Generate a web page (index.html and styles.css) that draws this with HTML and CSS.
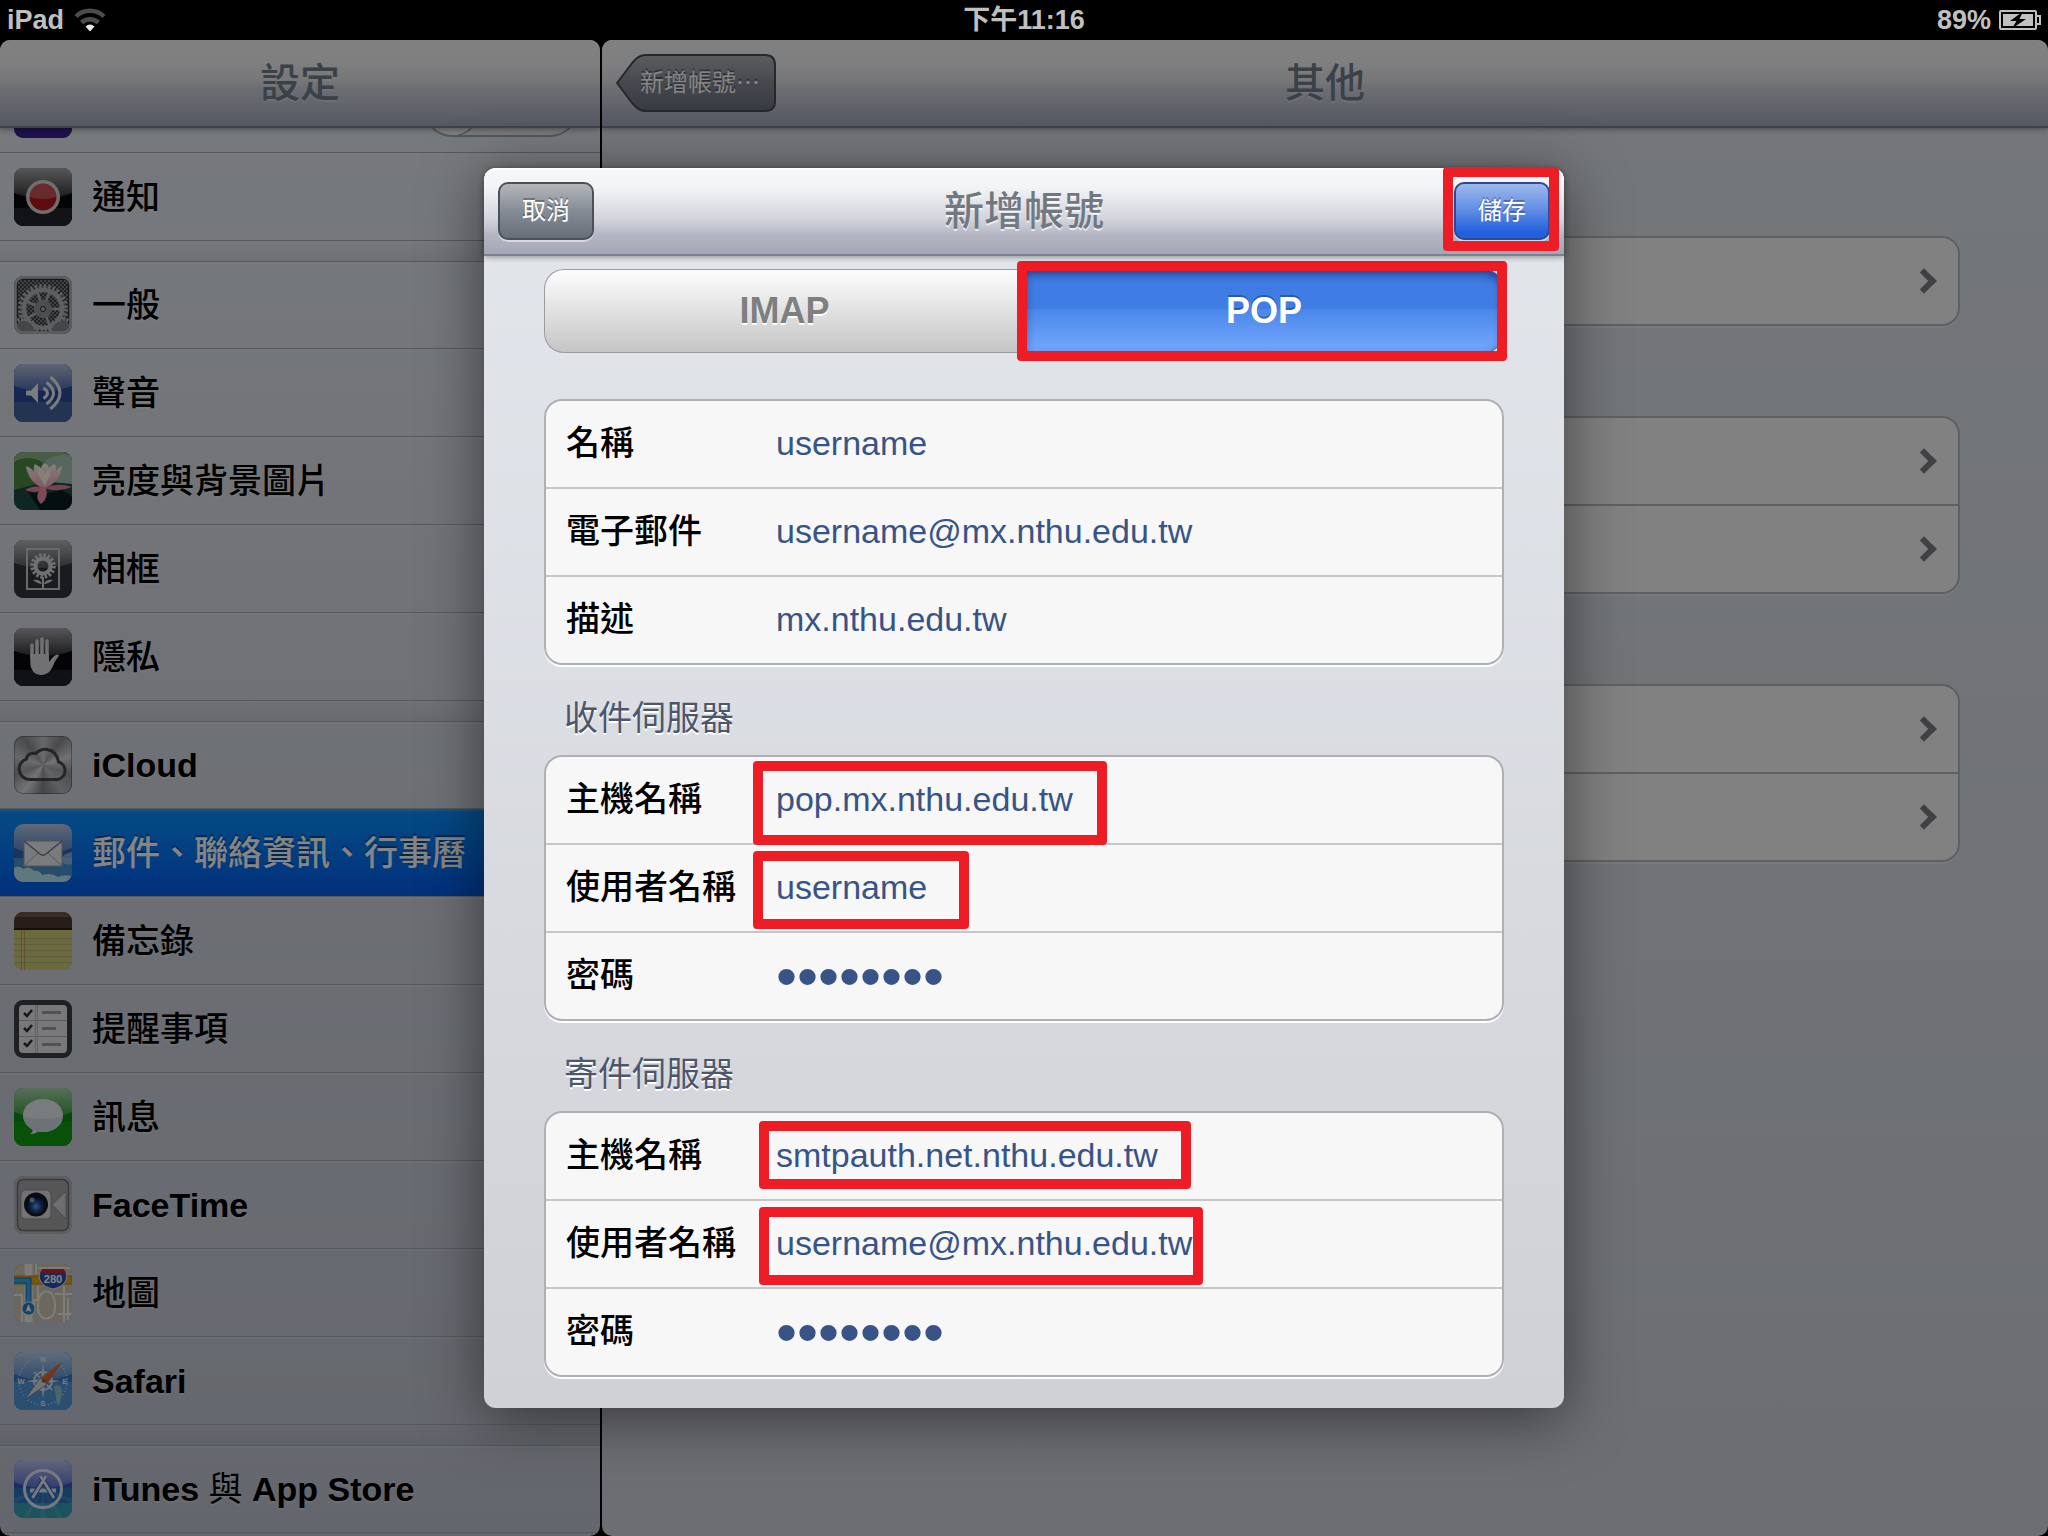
FILE: index.html
```html
<!DOCTYPE html>
<html lang="zh-Hant">
<head>
    <meta charset="UTF-8">
    <meta name="viewport" content="width=device-width, initial-scale=1.0">
    <title>設定</title>
    <link rel="stylesheet" href="styles.css">
</head>
<body>
    <!-- shared gradients -->
    <svg class="defs" width="0" height="0" aria-hidden="true">
        <defs>
            <linearGradient id="gloss" x1="0" y1="0" x2="0" y2="1">
                <stop offset="0" stop-color="#fff" stop-opacity=".65"/>
                <stop offset="1" stop-color="#fff" stop-opacity=".18"/>
            </linearGradient>
            <linearGradient id="needle" x1="0" y1="0" x2="1" y2="1">
                <stop offset="0" stop-color="#ff9a5c"/>
                <stop offset="1" stop-color="#b8381a"/>
            </linearGradient>
            <radialGradient id="lens" cx=".5" cy=".6" r=".5">
                <stop offset="0" stop-color="#5fa8f0"/>
                <stop offset=".5" stop-color="#1d4a94"/>
                <stop offset="1" stop-color="#0a1430"/>
            </radialGradient>
            <linearGradient id="petal" x1="0" y1="0" x2="0" y2="1">
                <stop offset="0" stop-color="#fffbf0"/>
                <stop offset="1" stop-color="#f2a5b8"/>
            </linearGradient>
            <linearGradient id="back" x1="0" y1="0" x2="0" y2="1">
                <stop offset="0" stop-color="#b0b2b8"/>
                <stop offset=".5" stop-color="#868b96"/>
                <stop offset="1" stop-color="#6b7180"/>
            </linearGradient>
            <pattern id="mesh" width="4" height="4" patternUnits="userSpaceOnUse">
                <rect width="4" height="4" fill="#7c7d81"/>
                <circle cx="1" cy="1" r="1" fill="#2a2b2f"/>
                <circle cx="3" cy="3" r="1" fill="#2a2b2f"/>
            </pattern>
        </defs>
    </svg>

    <header class="status-bar">
        <div class="status-left">
            <span>iPad</span>
            <svg width="32" height="24" viewBox="0 0 32 24" fill="none" aria-hidden="true">
                <path d="M2 8.500a20 20 0 0 1 28 0" stroke="#4c4c4c" stroke-width="4.500"/>
                <path d="M7.500 14.500a12.500 12.500 0 0 1 17 0" stroke="#4c4c4c" stroke-width="4.500"/>
                <path d="M16 23.500l-4.500-5q4.500-4 9 0z" fill="#e8e8e8"/>
            </svg>
        </div>
        <div class="status-time">下午11:16</div>
        <div class="status-right">
            <span>89%</span>
            <svg width="42" height="20" viewBox="0 0 42 20" aria-hidden="true">
                <rect x="1" y="1" width="36" height="18" rx="1" fill="none" stroke="#c0c0c0" stroke-width="2"/>
                <path d="M38 6h3v8h-3" fill="none" stroke="#c0c0c0" stroke-width="2"/>
                <rect x="4" y="4" width="30" height="12" fill="#c0c0c0"/>
                <path d="M24 1.500L11 11h6.500L13 18.500 27 9h-6.500z" fill="#000"/>
            </svg>
        </div>
    </header>

    <div class="app">
        <aside class="panel sidebar">
            <div class="navbar"><h1>設定</h1></div>
            <nav class="list">
                <div class="item">
                    <svg class="icon" viewBox="0 0 58 58"><rect width="58" height="58" fill="#3b2191"/></svg>
                    <input class="switch" type="checkbox" aria-label="勿擾模式">
                </div>
                <a class="item" href="#">
                    <svg class="icon" viewBox="0 0 58 58">
                        <rect width="58" height="58" fill="#08090d"/>
                        <rect y="40" width="58" height="18" fill="#24262b"/>
                        <path d="M0 0h58v25q-29 11-58 0z" fill="url(#gloss)"/>
                        <circle cx="29" cy="29" r="17" fill="#d5d5d5"/>
                        <circle cx="29" cy="29" r="13.500" fill="#b8181c"/>
                        <path d="M15.500 29a13.500 13.500 0 0 1 27 0q-13 4-27 0z" fill="#fff" opacity=".25"/>
                    </svg>
                    <span>通知</span>
                </a>
                <div class="gap"></div>
                <a class="item first" href="#">
                    <svg class="icon" viewBox="0 0 58 58">
                        <rect width="58" height="58" fill="#9c9ea3"/>
                        <rect x="3" y="3" width="52" height="52" rx="5" fill="url(#mesh)" stroke="#222" stroke-width="1.500"/>
                        <g fill="none" stroke="#b4b6bb">
                            <circle cx="29" cy="33" r="22.500" stroke-width="5" stroke-dasharray="2.300 2.120"/>
                            <circle cx="29" cy="33" r="19" stroke-width="4.500"/>
                            <path d="M29 33L23 15M29 33L47 33M29 33L36 15M29 33L12 25M29 33L12 43M29 33L36 50" stroke-width="2.500"/>
                            <circle cx="10" cy="55" r="12" stroke-width="4" stroke-dasharray="2 1.800"/>
                            <circle cx="48" cy="55" r="12" stroke-width="4" stroke-dasharray="2 1.800"/>
                        </g>
                        <circle cx="10" cy="55" r="10" fill="#85878c"/>
                        <circle cx="48" cy="55" r="10" fill="#85878c"/>
                        <circle cx="29" cy="33" r="9" fill="#94969b"/>
                        <circle cx="29" cy="33" r="2.500" fill="#bbb" stroke="#222"/>
                        <rect x="1.500" y="1.500" width="55" height="55" rx="8" fill="none" stroke="#b2b4b9" stroke-width="2.500"/>
                    </svg>
                    <span>一般</span>
                </a>
                <a class="item" href="#">
                    <svg class="icon" viewBox="0 0 58 58">
                        <rect width="58" height="58" fill="#2b4d9e"/>
                        <rect y="38" width="58" height="20" fill="#44659f"/>
                        <path d="M0 0h58v22q-29 10-58 0z" fill="url(#gloss)"/>
                        <path d="M12 26.500h5l7-7.500v20l-7-7.500h-5z" fill="#eceef4"/>
                        <path d="M29.500 24q8 5 0 10.500M32.500 18.500q14 10.500 0 21.500M36.500 13q19 16 0 32" fill="none" stroke="#eceef4" stroke-width="3"/>
                    </svg>
                    <span>聲音</span>
                </a>
                <a class="item" href="#">
                    <svg class="icon" viewBox="0 0 58 58">
                        <rect width="58" height="58" fill="#1d4a44"/>
                        <path d="M0 0h58v24q-14-8-29-6-17 2-29 14z" fill="#8fb386"/>
                        <path d="M0 10q14-8 28 0l10 18-38 10z" fill="#4d8a44"/>
                        <path d="M32 8q16-8 26-4v28l-22-2z" fill="#a7c3b4"/>
                        <path d="M14 40l16 2 18-4 10 6v14H26z" fill="#0b1b22"/>
                        <path d="M30 37Q14 30 12 14q6 2 8 6-1-5 1-8 4 2 6 5 0-4 4-6 4 2 4 6 2-4 6-5 2 4 0 9 3-6 7-7-1 15-18 23z" fill="url(#petal)"/>
                        <path d="M31 34L24 22l1-8 6 8 6-8-1 9z" fill="#fff6ea"/>
                        <path d="M30 36q-10-4-19 2 10 4 19 0zM30 36q14-6 28-1-14 6-28 1z" fill="#e8809b"/>
                        <path d="M28 36q-9 8-1 16 8-6 5-16z" fill="#f08fa8"/>
                    </svg>
                    <span>亮度與背景圖片</span>
                </a>
                <a class="item" href="#">
                    <svg class="icon" viewBox="0 0 58 58">
                        <rect width="58" height="58" fill="#33353a"/>
                        <path d="M0 0h58v23q-29 10-58 0z" fill="url(#gloss)"/>
                        <rect x="13" y="9" width="32" height="40" fill="none" stroke="#c9cbd0" stroke-width="2"/>
                        <circle cx="29" cy="26" r="10" fill="none" stroke="#d4d6da" stroke-width="5.500" stroke-dasharray="2.300 1.630"/>
                        <circle cx="29" cy="26" r="7.500" fill="none" stroke="#d4d6da" stroke-width="4"/>
                        <path d="M29 37v12" stroke="#d4d6da" stroke-width="2"/>
                        <path d="M28 44q-4 0-9-4 7-1 9 4zM30 44q4 0 9-4-7-1-9 4z" fill="#d4d6da"/>
                    </svg>
                    <span>相框</span>
                </a>
                <a class="item" href="#">
                    <svg class="icon" viewBox="0 0 58 58">
                        <rect width="58" height="58" fill="#08090d"/>
                        <rect y="42" width="58" height="16" fill="#202227"/>
                        <path d="M0 0h58v23q-29 10-58 0z" fill="url(#gloss)"/>
                        <g fill="none" stroke="#d8d9dc" stroke-width="3.500" stroke-linecap="round">
                            <path d="M18 30V17M23 28V13M28 28V11M33 28V13"/>
                        </g>
                        <path d="M16.300 26h18.500l.5 8q3-6 8-7.500 2.500 0 1 2-4 5-6 11-4 8-12 7.500-9-1-10-11z" fill="#d8d9dc"/>
                    </svg>
                    <span>隱私</span>
                </a>
                <div class="gap"></div>
                <a class="item first" href="#">
                    <svg class="icon metal" viewBox="0 0 58 58">
                        <path d="M15 43.500a10.500 10.500 0 0 1-2.500-20.500q1-6.500 9.500-5.500 5-5 11-4 10 1.500 11.500 12.500a9 9 0 0 1-1 17.500z" fill="#fff" fill-opacity=".15" stroke="#45474b" stroke-width="3"/>
                    </svg>
                    <span class="latin">iCloud</span>
                </a>
                <a class="item selected" href="#">
                    <svg class="icon" viewBox="0 0 58 58">
                        <rect width="58" height="58" fill="#2f64ba"/>
                        <rect y="34" width="58" height="24" fill="#4d93cf"/>
                        <path d="M0 44q5-3 9 1 6-4 11 2 5-1 8 4 9-3 16 2 6-3 14-1v6H0z" fill="#b8e4ef"/>
                        <path d="M46 36q4-7 12-8v12q-7 2-12-4z" fill="#a5c8ea" opacity=".7"/>
                        <path d="M0 0h58v24q-29 12-58 0z" fill="url(#gloss)"/>
                        <rect x="10" y="17" width="38" height="25" fill="#e9ebef" stroke="#9aa2ae"/>
                        <path d="M10 17l16 13q3 2.500 6 0l16-13" fill="none" stroke="#6f7783" stroke-width="1.300"/>
                        <path d="M10 42l14-13M48 42L34 29" stroke="#a3a9b3" fill="none"/>
                    </svg>
                    <span>郵件、聯絡資訊、行事曆</span>
                </a>
                <a class="item" href="#">
                    <svg class="icon" viewBox="0 0 58 58">
                        <rect width="58" height="58" fill="#d0cd78"/>
                        <path d="M0 26.500h58M0 32.500h58M0 38.500h58M0 44.500h58M0 50.500h58" stroke="#b0b27c"/>
                        <path d="M7.500 18v40M10.500 18v40" stroke="#bd9a62"/>
                        <rect width="58" height="17" fill="#4d3833"/>
                        <rect y="16" width="58" height="2" fill="#2a1c18"/>
                        <rect width="58" height="5" fill="#6b5650"/>
                    </svg>
                    <span>備忘錄</span>
                </a>
                <a class="item" href="#">
                    <svg class="icon" viewBox="0 0 58 58">
                        <rect width="58" height="58" fill="#3c3e43"/>
                        <rect x="5" y="5" width="48" height="48" rx="4" fill="#e6e6ea"/>
                        <path d="M5 20.500h48M5 36.500h48" stroke="#aeb0b6"/>
                        <path d="M21.500 5v48M23.500 5v48" stroke="#e5aab4"/>
                        <path d="M10 13l3 3 5-6M10 28l3 3 5-6M10 43l3 3 5-6" fill="none" stroke="#2b2c30" stroke-width="2.500"/>
                        <path d="M28 12.500h19M28 28.500h14M28 44.500h19" stroke="#9a9ca2" stroke-width="3"/>
                    </svg>
                    <span>提醒事項</span>
                </a>
                <a class="item" href="#">
                    <svg class="icon" viewBox="0 0 58 58">
                        <rect width="58" height="58" fill="#0c8a12"/>
                        <rect y="34" width="58" height="24" fill="#109c10"/>
                        <path d="M0 0h58v24q-29 12-58 0z" fill="url(#gloss)"/>
                        <path d="M29 11c11 0 20 7 20 16.500S40 44 29 44q-3 0-5-.5-4 3-8 2.500 3-2 3-4.500C13 39 9 33 9 27.500 9 18 18 11 29 11z" fill="#e6edf2"/>
                        <path d="M9.500 29q19 4 39 0c-1 9-9 15-19.500 15S11 38 9.500 29z" fill="#d0dae4"/>
                    </svg>
                    <span>訊息</span>
                </a>
                <a class="item" href="#">
                    <svg class="icon" viewBox="0 0 58 58">
                        <rect width="58" height="58" fill="#b4b5b8"/>
                        <rect x="3.500" y="3.500" width="51" height="51" rx="6" fill="#a5a6a8" stroke="#6c6d70" stroke-width="1.500"/>
                        <rect x="7" y="14" width="30" height="29" rx="5" fill="#dcdde0" stroke="#8a8b8e"/>
                        <path d="M38 28.500L52 15v28z" fill="#d0d1d4" stroke="#8a8b8e"/>
                        <circle cx="22" cy="28.500" r="12" fill="#17181c"/>
                        <circle cx="22" cy="28.500" r="9.500" fill="url(#lens)"/>
                        <circle cx="18" cy="24" r="2.500" fill="#b8d4f8" opacity=".7"/>
                    </svg>
                    <span class="latin">FaceTime</span>
                </a>
                <a class="item" href="#">
                    <svg class="icon" viewBox="0 0 58 58">
                        <rect width="58" height="58" fill="#cfc8b2"/>
                        <g fill="none" stroke="#f0eee8" stroke-width="2">
                            <path d="M0 31h8v27M24 22v14h-4v10M50 22v36M54 34v24M24 40a8 12 0 0 1 17 0v5a8 9 0 0 1-17 0zM41 30h17M44 50h14M24 4h34M22 0v10"/>
                            <path d="M14.500 0v58" stroke-width="8"/>
                        </g>
                        <rect y="12" width="58" height="8" fill="#e4a812" stroke="#b38920"/>
                        <path d="M0 16.500h14.500V42" fill="none" stroke="#1673b8" stroke-width="6"/>
                        <path d="M0 16.500h14.500V42" fill="none" stroke="#38a8ec" stroke-width="4"/>
                        <circle cx="14.500" cy="44.500" r="6.500" fill="#2b7fc4" stroke="#cfe2f2"/>
                        <path d="M14.500 40l3 8-3-1.500-3 1.500z" fill="#fff"/>
                        <path d="M28 5h22q5 7 1 13-3 5-12 7-9-2-12-7-4-6 1-13z" fill="#2a52b0" stroke="#e6e9f2"/>
                        <path d="M28 5h22l2 4H26z" fill="#c3283a"/>
                        <text x="39" y="18.500" text-anchor="middle" class="shield">280</text>
                    </svg>
                    <span>地圖</span>
                </a>
                <a class="item" href="#">
                    <svg class="icon" viewBox="0 0 58 58">
                        <rect width="58" height="58" fill="#3a78c8"/>
                        <rect y="30" width="58" height="28" fill="#5598d8"/>
                        <path d="M0 0h58v22q-29 12-58 0z" fill="url(#gloss)"/>
                        <path d="M40 34q8-2 8 6l-3 14q-3-2-3-10z" fill="#a4d4c8" opacity=".7"/>
                        <circle cx="29" cy="29" r="24" fill="none" stroke="#cfe0f4" stroke-width="2" stroke-dasharray="1 2.500" opacity=".7"/>
                        <circle cx="29" cy="29" r="9" fill="none" stroke="#d8e6f6" stroke-width="2"/>
                        <path d="M29 11l2 16 16 2-16 2-2 16-2-16-16-2 16-2z" fill="#d8e6f6"/>
                        <path d="M20 20l18 18M38 20L20 38" stroke="#d8e6f6" stroke-width="1.500"/>
                        <g class="compass" text-anchor="middle">
                            <text x="29" y="9.500">N</text>
                            <text x="29" y="54">S</text>
                            <text x="7" y="32">W</text>
                            <text x="51" y="32">E</text>
                        </g>
                        <path d="M48.500 9.500L33 32l-7-6z" fill="url(#needle)"/>
                        <path d="M11 47.500L33 32l-7-6z" fill="#dcdfe4" stroke="#6c7482" stroke-width=".7"/>
                        <circle cx="29.500" cy="29" r="1.800" fill="#667"/>
                    </svg>
                    <span class="latin">Safari</span>
                </a>
                <div class="gap"></div>
                <a class="item first" href="#">
                    <svg class="icon" viewBox="0 0 58 58">
                        <rect width="58" height="30" fill="#3a55c8"/>
                        <rect y="28" width="58" height="16" fill="#2775ba"/>
                        <rect y="43" width="58" height="15" fill="#349fb4"/>
                        <path d="M29 29L0 44v-6zM29 29L8 58h6zM29 29L26 58h6zM29 29L44 58h6zM29 29L58 44v-6z" fill="#fff" opacity=".1"/>
                        <path d="M0 0h58v22q-29 12-58 0z" fill="url(#gloss)"/>
                        <circle cx="29" cy="29" r="18.500" fill="none" stroke="#e2e8f4" stroke-width="3"/>
                        <path d="M16 30.500h26" stroke="#e2e8f4" stroke-width="4"/>
                        <path d="M31 17L18.500 38M27 17l13 21" stroke="#3659b8" stroke-width="5"/>
                        <path d="M32 16L18.500 38M26.500 16L40 38" stroke="#e2e8f4" stroke-width="3"/>
                    </svg>
                    <span class="latin">iTunes <span class="cjk">與</span> App Store</span>
                </a>
            </nav>
        </aside>

        <main class="panel detail">
            <div class="navbar">
                <button class="back" type="button">
                    <svg viewBox="0 0 160 58" aria-hidden="true">
                        <path d="M1 29L17 8Q23 1 29 1H149Q159 1 159 11V47Q159 57 149 57H29Q23 57 17 50Z" fill="url(#back)" stroke="#4a4d55" stroke-width="2"/>
                    </svg>
                    <span>新增帳號⋯</span>
                </button>
                <h2>其他</h2>
            </div>
            <div class="cards">
                <div class="card"><a href="#" aria-label="加入郵件帳號"><i class="chevron"></i></a></div>
                <div class="card">
                    <a href="#" aria-label="加入 LDAP 帳號"><i class="chevron"></i></a>
                    <a href="#" aria-label="加入 CardDAV 帳號"><i class="chevron"></i></a>
                </div>
                <div class="card">
                    <a href="#" aria-label="加入 CalDAV 帳號"><i class="chevron"></i></a>
                    <a href="#" aria-label="加入已訂閱的行事曆"><i class="chevron"></i></a>
                </div>
            </div>
        </main>

        <div class="backdrop">
            <form class="modal" role="dialog" aria-labelledby="modal-title">
                <div class="modal-header">
                    <button class="btn" type="button">取消</button>
                    <h2 id="modal-title">新增帳號</h2>
                    <div class="marked">
                        <button class="btn primary" type="button">儲存</button>
                        <span class="mark mark-save"></span>
                    </div>
                </div>
                <div class="modal-body">
                    <div class="segment">
                        <button class="seg" type="button">IMAP</button>
                        <div class="marked">
                            <button class="seg active" type="button">POP</button>
                            <span class="mark mark-pop"></span>
                        </div>
                    </div>

                    <div class="group">
                        <div class="row">
                            <label for="name">名稱</label>
                            <div class="field"><input id="name" type="text" value="username"></div>
                        </div>
                        <div class="row">
                            <label for="email">電子郵件</label>
                            <div class="field"><input id="email" type="text" value="username@mx.nthu.edu.tw"></div>
                        </div>
                        <div class="row">
                            <label for="desc">描述</label>
                            <div class="field"><input id="desc" type="text" value="mx.nthu.edu.tw"></div>
                        </div>
                    </div>

                    <h3>收件伺服器</h3>
                    <div class="group">
                        <div class="row">
                            <label for="in-host">主機名稱</label>
                            <div class="field"><input id="in-host" type="text" value="pop.mx.nthu.edu.tw"><span class="mark mark-in-host"></span></div>
                        </div>
                        <div class="row">
                            <label for="in-user">使用者名稱</label>
                            <div class="field"><input id="in-user" type="text" value="username"><span class="mark mark-in-user"></span></div>
                        </div>
                        <div class="row">
                            <label for="in-pass">密碼</label>
                            <div class="field"><input id="in-pass" type="password" value="password"></div>
                        </div>
                    </div>

                    <h3>寄件伺服器</h3>
                    <div class="group">
                        <div class="row">
                            <label for="out-host">主機名稱</label>
                            <div class="field"><input id="out-host" type="text" value="smtpauth.net.nthu.edu.tw"><span class="mark mark-out-host"></span></div>
                        </div>
                        <div class="row">
                            <label for="out-user">使用者名稱</label>
                            <div class="field"><input id="out-user" type="text" value="username@mx.nthu.edu.tw"><span class="mark mark-out-user"></span></div>
                        </div>
                        <div class="row">
                            <label for="out-pass">密碼</label>
                            <div class="field"><input id="out-pass" type="password" value="password"></div>
                        </div>
                    </div>
                </div>
            </form>
        </div>
    </div>
</body>
</html>
```

FILE: styles.css
```css
* {
    box-sizing: border-box;
}

body {
    margin: 0;
    height: 100vh;
    display: flex;
    flex-direction: column;
    overflow: hidden;
    background: #000;
    font-family: "Liberation Sans", "Noto Sans CJK TC", sans-serif;
    font-size: 34px;
    color: #000;
}

h1, h2, h3 {
    margin: 0;
    font-weight: 500;
}

button, input {
    font-family: inherit;
    border: none;
    padding: 0;
    margin: 0;
}

a {
    color: inherit;
    text-decoration: none;
}

.defs {
    position: absolute;
}

/* status bar */
.status-bar {
    flex: none;
    height: 40px;
    padding: 0 7px;
    display: grid;
    grid-template-columns: 1fr auto 1fr;
    align-items: center;
    color: #c0c0c0;
    font-size: 27px;
    font-weight: bold;
    line-height: 40px;
}

.status-left,
.status-right {
    display: flex;
    align-items: center;
    gap: 10px;
}

.status-right {
    justify-content: flex-end;
    gap: 8px;
}

/* two panels */
.app {
    position: relative;
    flex: 1;
    min-height: 0;
    display: flex;
    gap: 2px;
}

.panel {
    display: flex;
    flex-direction: column;
    overflow: hidden;
    border-radius: 10px;
}

.sidebar {
    width: 600px;
    flex: none;
    background: linear-gradient(#e5ebf1, #d7dbe4 40%, #bfc5d1);
}

.detail {
    flex: 1;
    background: linear-gradient(#dfe5eb, #d0d3de);
}

.navbar,
.modal-header {
    flex: none;
    height: 88px;
    display: flex;
    align-items: center;
    justify-content: center;
    border-bottom: 2px solid #7c8095;
    background: linear-gradient(#f6f7f8, #f3f4f6 22%, #d2d4dc 60%, #b3b5c3 78%, #a4a7b5);
    box-shadow: inset 0 2px #fff, 0 1px 6px rgba(0, 0, 0, 0.4);
    position: relative;
    z-index: 1;
}

.navbar h1,
.navbar h2,
.modal-header h2 {
    font-size: 40px;
    line-height: 60px;
    color: #717880;
    text-shadow: 0 2px rgba(255, 255, 255, 0.7);
}

.navbar {
    background: linear-gradient(#f6f7f8, #f3f4f6 25%, #e2e3e6 48%, #d0d3de 56%, #a4aabb);
    box-shadow: 0 1px 6px rgba(0, 0, 0, 0.4);
}

.navbar h1,
.navbar h2 {
    color: #6f7d8a;
    text-shadow: 0 2px rgba(255, 255, 255, 0.3);
}

/* settings list */
.list {
    flex: 1;
    min-height: 0;
    overflow: hidden;
}

.list > :first-child {
    margin-top: -63px;
}

.item {
    height: 88px;
    padding: 0 22px 0 14px;
    display: flex;
    align-items: center;
    gap: 20px;
    border-bottom: 1px solid #a5a9b0;
    box-shadow: inset 0 2px rgba(255, 255, 255, 0.15);
    font-weight: 500;
    line-height: 50px;
    white-space: nowrap;
    text-shadow: 0 2px rgba(255, 255, 255, 0.25);
}

.item.first {
    border-top: 1px solid #a5a9b0;
}

.item.selected {
    background: linear-gradient(#0a92ff, #045cee);
    color: #fff;
    text-shadow: 0 -2px rgba(0, 0, 0, 0.4);
}

.gap {
    height: 20px;
    background: linear-gradient(rgba(0, 0, 0, 0), rgba(0, 0, 0, 0.06));
}

.latin {
    font-weight: bold;
}

.cjk {
    font-weight: 400;
}

.icon {
    flex: none;
    width: 58px;
    height: 58px;
    border-radius: 9px;
    box-shadow: inset 0 0 0 1px rgba(0, 0, 0, 0.3);
}

.metal {
    background: conic-gradient(#c8c9cc, #8e8f93, #d8d9dc, #97989c, #b5b6ba, #85868a, #dcdde0, #93949a, #c8c9cc, #8e8f93, #c8c9cc);
}

.shield {
    font-size: 11px;
    font-weight: bold;
    fill: #fff;
    text-shadow: none;
}

.compass {
    font-size: 8px;
    font-weight: bold;
    fill: #e6eef8;
    text-shadow: none;
}

.switch {
    appearance: none;
    width: 154px;
    height: 56px;
    margin-left: auto;
    border: 2px solid #a3a5a9;
    border-radius: 28px;
    background: radial-gradient(circle at 26px 26px, #f4f4f6 26px, #85878c 27px, #e9eaec 28px);
}

/* detail cards */
.back {
    position: absolute;
    left: 14px;
    top: 14px;
    width: 160px;
    height: 58px;
    padding-left: 24px;
    background: none;
    color: #fff;
    font-size: 24px;
    line-height: 58px;
    text-align: left;
    text-shadow: 0 -2px rgba(0, 0, 0, 0.4);
}

.back svg {
    position: absolute;
    inset: 0;
}

.back span {
    position: relative;
}

.cards {
    padding: 108px 88px 0;
    display: flex;
    flex-direction: column;
    gap: 90px;
}

.card {
    border: 2px solid #b6b8be;
    border-radius: 18px;
    background: #f7f7f7;
    box-shadow: 0 2px rgba(255, 255, 255, 0.3);
}

.card a {
    height: 86px;
    padding-right: 25px;
    display: flex;
    align-items: center;
    justify-content: flex-end;
}

.card a + a {
    height: 88px;
    border-top: 2px solid #b6b8be;
}

.chevron {
    width: 18px;
    height: 18px;
    border: solid #7c7d82;
    border-width: 6px 6px 0 0;
    transform: rotate(45deg);
}

/* modal */
.backdrop {
    position: absolute;
    inset: 0;
    z-index: 2;
    display: flex;
    align-items: center;
    justify-content: center;
    background: rgba(0, 0, 0, 0.48);
}

.modal {
    width: 100%;
    max-width: 1080px;
    border-radius: 12px;
    background: linear-gradient(#e3e7ec, #d0d1d7);
    box-shadow: 0 10px 60px rgba(0, 0, 0, 0.5);
}

.modal-header {
    padding: 0 14px;
    justify-content: space-between;
    border-radius: 12px 12px 0 0;
}

.modal-body {
    padding: 13px 60px 31px;
}

.btn {
    display: block;
    width: 96px;
    height: 58px;
    border: 2px solid #4c5058;
    border-radius: 10px;
    background: linear-gradient(#b4b6bb, #858c96 50%, #676e79);
    box-shadow: 0 2px rgba(255, 255, 255, 0.5);
    color: #fff;
    font-size: 24px;
    line-height: 54px;
    text-shadow: 0 -2px rgba(0, 0, 0, 0.3);
}

.btn.primary {
    border-color: #2a4a98;
    background: linear-gradient(#9db8ec, #6590e4 45%, #2260dd 90%);
}

.segment {
    display: grid;
    grid-template-columns: 1fr 1fr;
    margin-bottom: 46px;
}

.seg {
    width: 100%;
    height: 84px;
    border: 1px solid #9b9b9b;
    border-right: none;
    border-radius: 20px 0 0 20px;
    background: linear-gradient(#fdfdfd, #c5c5c5);
    color: #7f7f7f;
    font-size: 36px;
    font-weight: bold;
    text-shadow: 0 2px #fff;
}

.seg.active {
    display: block;
    border: 1px solid #2c5cb0;
    border-radius: 0 20px 20px 0;
    background: linear-gradient(#3f7ce4 48%, #4a87e9 48%, #74a8fe);
    box-shadow: inset 0 4px 10px rgba(0, 0, 50, 0.5);
    color: #fff;
    text-shadow: 0 -2px rgba(0, 0, 0, 0.3);
}

.modal h3 {
    height: 90px;
    padding: 16px 20px 0;
    font-size: 34px;
    font-weight: 400;
    line-height: 74px;
    color: #4c566c;
    text-shadow: 0 2px #fff;
}

.group {
    border: 2px solid #aeb0b6;
    border-radius: 18px;
    background: #f7f7f7;
    box-shadow: 0 2px #fff;
}

.row {
    display: flex;
    align-items: stretch;
    height: 88px;
    padding-left: 20px;
    border-bottom: 2px solid #c6c6c8;
}

.row:last-child {
    height: 86px;
    border-bottom: none;
}

.row label {
    width: 210px;
    font-weight: 500;
    line-height: 84px;
}

.field {
    position: relative;
    flex: 1;
    display: flex;
}

.field input {
    width: 100%;
    padding-bottom: 2px;
    background: none;
    outline: none;
    color: #385487;
    font-size: 34px;
}

.field input[type="password"] {
    padding-bottom: 0;
    font-size: 60px;
}

/* red highlight boxes */
.marked {
    position: relative;
}

.mark {
    position: absolute;
    border: 10px solid #ee1c25;
    border-radius: 4px;
    pointer-events: none;
}

.mark-save {
    inset: -15px -9px -11px -11px;
}

.mark-pop {
    inset: -8px -3px -8px -7px;
}

.mark-in-host {
    left: -23px;
    top: 4px;
    width: 354px;
    height: 84px;
}

.mark-in-user {
    left: -23px;
    top: 6px;
    width: 216px;
    height: 78px;
}

.mark-out-host {
    left: -17px;
    top: 8px;
    width: 432px;
    height: 68px;
}

.mark-out-user {
    left: -17px;
    top: 6px;
    width: 444px;
    height: 78px;
}
```
